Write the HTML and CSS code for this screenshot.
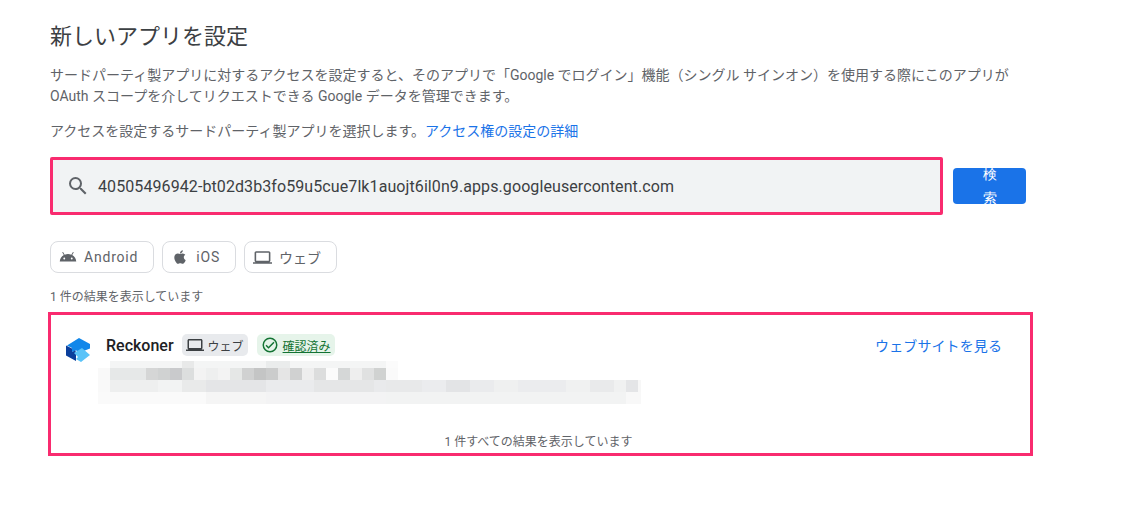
FILE: index.html
```html
<!DOCTYPE html>
<html lang="ja">
<head>
<meta charset="utf-8">
<title>新しいアプリを設定</title>
<link rel="stylesheet" href="styles.css">
</head>
<body>
<main class="page">
  <h1 class="title">新しいアプリを設定</h1>
  <p class="desc">サードパーティ製アプリに対するアクセスを設定すると、そのアプリで「Google でログイン」機能（シングル サインオン）を使用する際にこのアプリが<br>OAuth スコープを介してリクエストできる Google データを管理できます。</p>
  <p class="desc choose">アクセスを設定するサードパーティ製アプリを選択します。<a class="link" href="#">アクセス権の設定の詳細</a></p>

  <div class="search-row">
    <div class="search">
      <svg class="search-icon" viewBox="0 0 24 24" width="24" height="24"><path fill="#5f6368" d="M15.5 14h-.79l-.28-.27A6.47 6.47 0 0 0 16 9.5 6.5 6.5 0 1 0 9.5 16c1.61 0 3.09-.59 4.23-1.57l.27.28v.79l5 4.99L20.49 19l-4.99-5zm-6 0C7.01 14 5 11.99 5 9.5S7.01 5 9.5 5 14 7.01 14 9.5 11.99 14 9.5 14z"/></svg>
      <span class="search-text">40505496942-bt02d3b3fo59u5cue7lk1auojt6il0n9.apps.googleusercontent.com</span>
    </div>
    <button class="search-btn"><span class="search-btn-text">検索</span></button>
  </div>

  <div class="chips">
    <div class="chip">
      <svg viewBox="0 0 24 24" width="18" height="18"><path fill="#5f6368" d="M17.6 9.48l1.84-3.18c.16-.31.04-.69-.26-.85a.637.637 0 0 0-.83.22l-1.88 3.24a11.43 11.43 0 0 0-8.94 0L5.65 5.67a.643.643 0 0 0-.87-.2c-.28.18-.37.54-.22.83L6.4 9.48A10.78 10.78 0 0 0 1 18h22a10.78 10.78 0 0 0-5.4-8.52zM7 15.25a1.25 1.25 0 1 1 0-2.5 1.25 1.25 0 0 1 0 2.5zm10 0a1.25 1.25 0 1 1 0-2.5 1.25 1.25 0 0 1 0 2.5z"/></svg>
      <span>Android</span>
    </div>
    <div class="chip">
      <svg viewBox="0 0 24 24" width="18" height="18"><path fill="#5f6368" d="M17.05 20.28c-.98.95-2.05.8-3.08.35-1.09-.46-2.09-.48-3.24 0-1.44.62-2.2.44-3.06-.35C2.79 15.25 3.51 7.59 9.05 7.31c1.35.07 2.29.74 3.08.8 1.18-.24 2.31-.93 3.57-.84 1.51.12 2.65.72 3.4 1.8-3.12 1.87-2.38 5.98.48 7.13-.57 1.5-1.31 2.99-2.54 4.09zM12.03 7.25c-.15-2.23 1.66-4.07 3.74-4.25.29 2.58-2.34 4.5-3.74 4.25z"/></svg>
      <span>iOS</span>
    </div>
    <div class="chip">
      <svg viewBox="0 0 24 24" width="19" height="19"><path fill="#5f6368" d="M20 18c1.1 0 1.99-.9 1.99-2L22 6c0-1.1-.9-2-2-2H4c-1.1 0-2 .9-2 2v10c0 1.1.9 2 2 2H0v2h24v-2h-4zM4 6h16v10H4V6z"/></svg>
      <span class="kana">ウェブ</span>
    </div>
  </div>

  <p class="count">1 件の結果を表示しています</p>

  <section class="results">
    <div class="result">
      <svg class="logo" viewBox="0 0 24 24" width="24" height="24">
        <path fill="#1187ea" d="M1 7.500 13 0l11 6v4.500l-9 3.500-5-1.500-4 1.500V10z"/>
        <path fill="#0b3f9c" d="M0 7.500l6 3v3.500l3-1.500 1 1.500v9L0 17.500z"/>
        <path fill="#5ac3f8" d="M8 15l8-5 8 7-9 7-5-3 2-2z"/>
      </svg>
      <div class="result-body">
        <div class="result-head">
          <span class="app-name">Reckoner</span>
          <span class="tag tag-web">
            <svg viewBox="0 0 24 24" width="18" height="18"><path fill="#3c4043" d="M20 18c1.100 0 1.990-.9 1.990-2L22 6c0-1.100-.9-2-2-2H4c-1.100 0-2 .9-2 2v10c0 1.100.9 2 2 2H0v2h24v-2h-4zM4 6h16v10H4V6z"/></svg>
            ウェブ
          </span>
          <span class="tag tag-ok">
            <svg viewBox="0 0 24 24" width="18" height="18"><path fill="#137333" d="M12 2a10 10 0 1 0 0 20 10 10 0 0 0 0-20zm0 18a8 8 0 1 1 0-16 8 8 0 0 1 0 16zm4.590-12.420L10 14.170l-2.590-2.580L6 13l4 4 8-8z"/></svg>
            <span class="ok-text">確認済み</span>
          </span>
          <a class="site-link" href="#">ウェブサイトを見る</a>
        </div>
        <svg class="redacted" width="543" height="43" viewBox="0 0 543 43">
          <g>
            <rect x="12" y="0" width="288" height="7" fill="#f4f5f5"/>
            <rect x="84" y="0" width="12" height="7" fill="#e8e9e9"/>
            <rect x="168" y="0" width="24" height="7" fill="#eaecec"/>
            <rect x="288" y="0" width="12" height="7" fill="#fbfbfb"/>
          </g>
          <g>
            <rect x="0" y="7" width="12" height="12" fill="#f9f9f9"/>
            <rect x="12" y="7" width="36" height="12" fill="#e6e8e8"/>
            <rect x="48" y="7" width="12" height="12" fill="#d5d6d6"/>
            <rect x="60" y="7" width="12" height="12" fill="#d0d2d2"/>
            <rect x="72" y="7" width="12" height="12" fill="#c9cacc"/>
            <rect x="84" y="7" width="12" height="12" fill="#dcdede"/>
            <rect x="96" y="7" width="12" height="12" fill="#f3f3f3"/>
            <rect x="108" y="7" width="12" height="12" fill="#eeefef"/>
            <rect x="120" y="7" width="12" height="12" fill="#f3f3f3"/>
            <rect x="132" y="7" width="12" height="12" fill="#e5e7e6"/>
            <rect x="144" y="7" width="12" height="12" fill="#d0d1d1"/>
            <rect x="156" y="7" width="12" height="12" fill="#c4c5c5"/>
            <rect x="168" y="7" width="12" height="12" fill="#cbcccc"/>
            <rect x="180" y="7" width="12" height="12" fill="#e5e5e5"/>
            <rect x="192" y="7" width="12" height="12" fill="#d0d1d1"/>
            <rect x="204" y="7" width="12" height="12" fill="#eeeeee"/>
            <rect x="216" y="7" width="12" height="12" fill="#dcdddd"/>
            <rect x="228" y="7" width="12" height="12" fill="#fbfbfb"/>
            <rect x="240" y="7" width="12" height="12" fill="#d5d7d7"/>
            <rect x="252" y="7" width="12" height="12" fill="#eeeeee"/>
            <rect x="264" y="7" width="12" height="12" fill="#e0e1e1"/>
            <rect x="276" y="7" width="12" height="12" fill="#d0d2d1"/>
            <rect x="288" y="7" width="12" height="12" fill="#fafafa"/>
          </g>
          <g>
            <rect x="0" y="19" width="12" height="12" fill="#f9f9f9"/>
            <rect x="12" y="19" width="48" height="12" fill="#eeefef"/>
            <rect x="60" y="19" width="24" height="12" fill="#f2f3f3"/>
            <rect x="84" y="19" width="24" height="12" fill="#e9eaea"/>
            <rect x="108" y="19" width="60" height="12" fill="#e4e5e7"/>
            <rect x="168" y="19" width="48" height="12" fill="#eaebed"/>
            <rect x="216" y="19" width="60" height="12" fill="#e5e6e7"/>
            <rect x="276" y="19" width="12" height="12" fill="#e9eaec"/>
            <rect x="288" y="19" width="36" height="12" fill="#e8e9ea"/>
            <rect x="324" y="19" width="24" height="12" fill="#ebecee"/>
            <rect x="348" y="19" width="24" height="12" fill="#e3e4e6"/>
            <rect x="372" y="19" width="24" height="12" fill="#eaebed"/>
            <rect x="396" y="19" width="24" height="12" fill="#eff0f0"/>
            <rect x="420" y="19" width="48" height="12" fill="#ebecee"/>
            <rect x="468" y="19" width="24" height="12" fill="#f0f1f1"/>
            <rect x="492" y="19" width="24" height="12" fill="#e9eaeb"/>
            <rect x="516" y="19" width="12" height="12" fill="#f0f1f1"/>
            <rect x="528" y="19" width="12" height="12" fill="#e4e5e7"/>
            <rect x="540" y="19" width="3" height="12" fill="#f7f7f7"/>
          </g>
          <g>
            <rect x="0" y="31" width="108" height="12" fill="#fafafa"/>
            <rect x="108" y="31" width="60" height="12" fill="#f5f5f5"/>
            <rect x="168" y="31" width="120" height="12" fill="#f3f3f4"/>
            <rect x="288" y="31" width="240" height="12" fill="#f2f3f3"/>
            <rect x="528" y="31" width="15" height="12" fill="#f8f8f8"/>
          </g>
        </svg>
      </div>
    </div>
    <p class="all-count">1 件すべての結果を表示しています</p>
  </section>
</main>
</body>
</html>
```
FILE: styles.css
```css
* { box-sizing: border-box; }
html, body { margin: 0; padding: 0; background: #fff; }
body {
  width: 1137px;
  height: 515px;
  overflow: hidden;
  font-family: Roboto, "Noto Sans CJK JP", sans-serif;
  color: #3c4043;
}
.page { padding: 23px 0 0 50px; }
.title {
  margin: 0;
  font-size: 22px;
  line-height: 28px;
  font-weight: 400;
  color: #3c4043;
}
.desc {
  margin: 14px 0 0;
  font-size: 14px;
  line-height: 21px;
  color: #5f6368;
}
.desc.choose { margin-top: 14px; }
.link { color: #1a73e8; text-decoration: none; }
.search-row {
  display: flex;
  align-items: center;
  margin-top: 15px;
}
.search {
  width: 893px;
  height: 58px;
  display: flex;
  align-items: center;
  padding-left: 13px;
  background: #f1f3f4;
  border: 3px solid #f92b6f;
  border-radius: 2px;
}
.search-icon { flex: none; }
.search-text {
  margin-left: 8px;
  font-size: 16px;
  letter-spacing: .09px;
  color: #3c4043;
}
.search-btn {
  width: 73px;
  height: 36px;
  margin-left: 10px;
  padding: 0;
  background: #1a73e8;
  border: 0;
  border-radius: 4px;
  overflow: hidden;
  display: flex;
  align-items: center;
  justify-content: center;
}
.search-btn-text {
  display: block;
  width: 16px;
  font-family: inherit;
  font-size: 14px;
  line-height: 24px;
  color: #fff;
  word-break: break-all;
}
.chips {
  display: flex;
  gap: 8px;
  margin-top: 26px;
}
.chip {
  height: 32px;
  display: flex;
  align-items: center;
  gap: 7px;
  padding: 0 15px 0 8px;
  border: 1px solid #dadce0;
  border-radius: 8px;
  font-size: 14px;
  letter-spacing: .8px;
  color: #5f6368;
}
.chip .kana { letter-spacing: 0; }
.count {
  margin: 16px 0 0;
  font-size: 12px;
  line-height: 16px;
  color: #5f6368;
}
.results {
  width: 985px;
  height: 144px;
  margin: 7px 0 0 -2px;
  border: 3px solid #f92b6f;
  position: relative;
}
.result {
  display: flex;
  padding: 19px 28px 0 15px;
}
.logo { flex: none; margin-top: 4px; }
.result-body { flex: 1; margin-left: 16px; }
.result-head {
  display: flex;
  align-items: center;
  height: 22px;
}
.app-name {
  font-size: 16px;
  font-weight: 500;
  color: #202124;
  margin-right: 8px;
}
.tag {
  height: 22px;
  display: inline-flex;
  align-items: center;
  gap: 4px;
  padding: 0 4px;
  border-radius: 5px;
  font-size: 12px;
}
.tag-web { background: #e8eaed; color: #3c4043; margin-right: 9px; }
.tag-ok { background: #e6f4ea; color: #137333; }
.ok-text { text-decoration: underline; }
.site-link {
  margin-left: auto;
  font-size: 14px;
  letter-spacing: .1px;
  color: #1a73e8;
  text-decoration: none;
}
.redacted {
  display: block;
  margin: 5px 0 0 -8px;
}
.all-count {
  position: absolute;
  left: 0;
  right: 4px;
  bottom: 3px;
  margin: 0;
  text-align: center;
  font-size: 12px;
  line-height: 16px;
  color: #5f6368;
}
```
